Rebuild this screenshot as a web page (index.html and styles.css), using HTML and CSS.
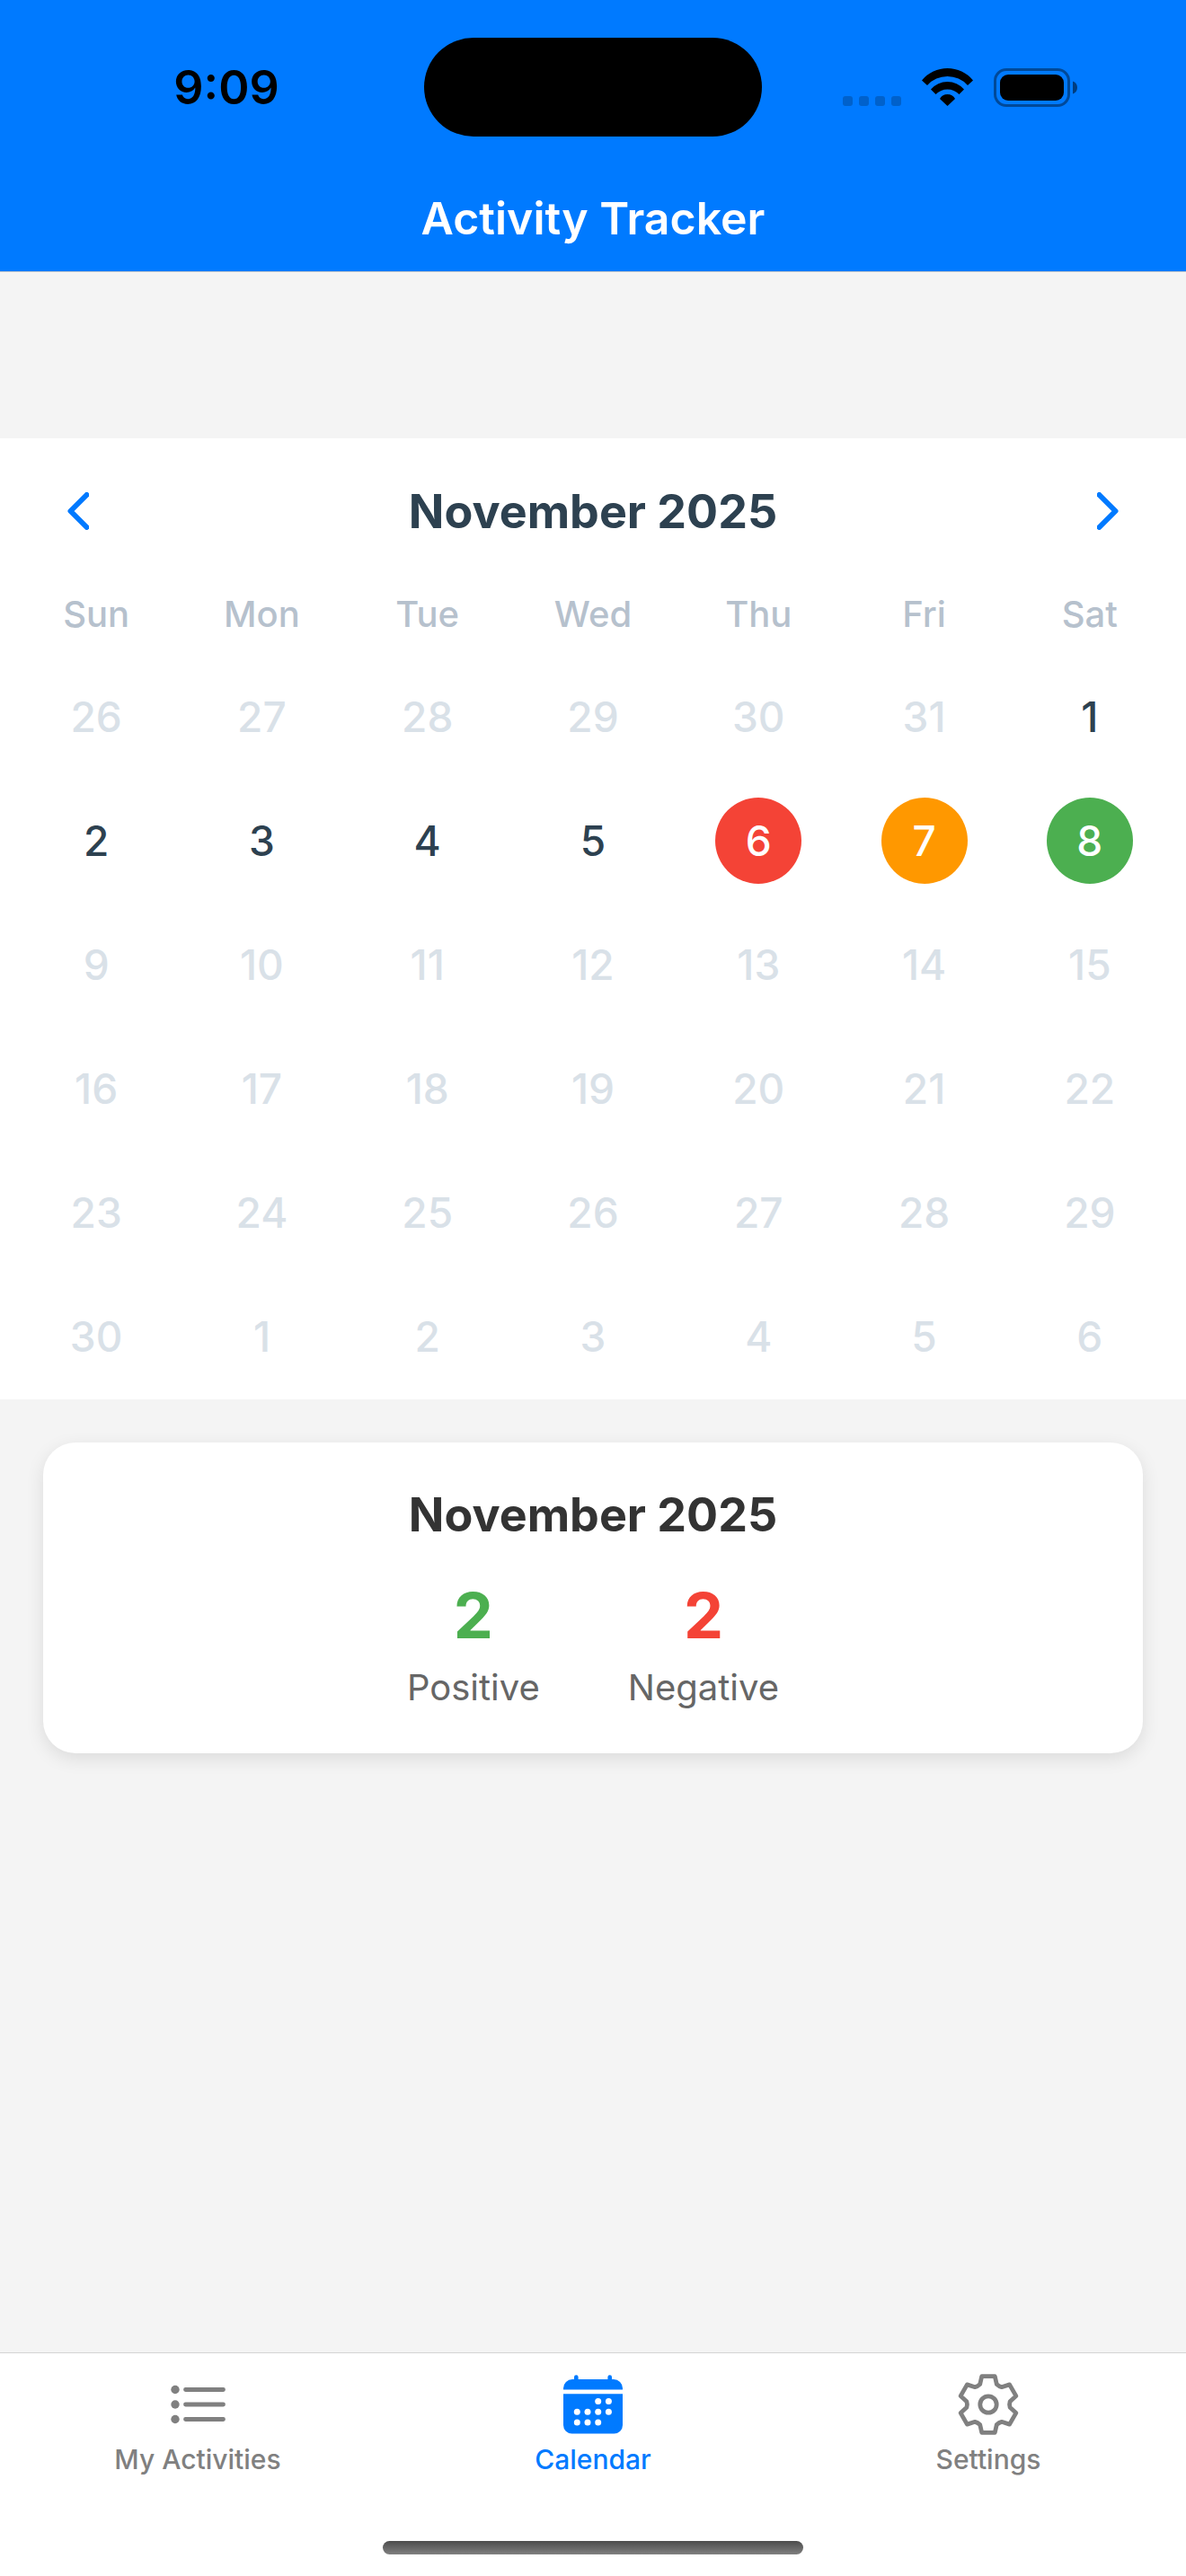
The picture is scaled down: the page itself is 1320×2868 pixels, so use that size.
FILE: index.html
```html
<!DOCTYPE html>
<html lang="en">
<head>
  <meta charset="UTF-8" />
  <meta name="viewport" content="width=device-width, initial-scale=1.0" />
  <title>Activity Tracker</title>
  <link rel="stylesheet" href="styles.css">
</head>
<body>

  <header class="header">
    <div class="status-bar">
      <span class="time">9:09</span>
      <span class="island"></span>
      <div class="status-icons">
        <svg class="signal" width="65" height="43" viewBox="0 0 65 43">
          <rect x="0" y="31" width="11" height="11" rx="3" />
          <rect x="18" y="31" width="11" height="11" rx="3" />
          <rect x="36" y="31" width="11" height="11" rx="3" />
          <rect x="54" y="31" width="11" height="11" rx="3" />
        </svg>
        <svg class="wifi" width="57" height="43" viewBox="0 0 57 43">
          <path d="M0 13.5A37 37 0 0 1 57 13.5L51 19A30.3 30.3 0 0 0 6 19Z" />
          <path d="M10 23.5A24.4 24.4 0 0 1 47 23.5L41.5 29A18 18 0 0 0 15.5 29Z" />
          <path d="M20 34A9.7 9.7 0 0 1 37 34L28.5 42Z" />
        </svg>
        <svg class="battery" width="93" height="43" viewBox="0 0 93 43">
          <rect x="1.5" y="1.5" width="82" height="40" rx="12.5" fill="none" stroke="#000" stroke-width="3" opacity="0.4" />
          <rect x="7" y="7" width="71" height="29" rx="9" />
          <path d="M88 14.5C91 15.5 93 18 93 21.5S91 27.5 88 28.5Z" opacity="0.5" />
        </svg>
      </div>
    </div>
    <h1 class="title">Activity Tracker</h1>
  </header>

  <main class="content">
    <section class="calendar">
      <div class="month-bar">
        <button class="arrow" type="button" aria-label="Previous month">
          <svg width="24" height="42" viewBox="0 0 24 42"><path d="M21.5 3L3.5 21L21.5 39" /></svg>
        </button>
        <h2 class="month">November 2025</h2>
        <button class="arrow" type="button" aria-label="Next month">
          <svg width="24" height="42" viewBox="0 0 24 42"><path d="M2.5 3L20.5 21L2.5 39" /></svg>
        </button>
      </div>

      <table class="days">
        <thead>
          <tr>
            <th>Sun</th><th>Mon</th><th>Tue</th><th>Wed</th><th>Thu</th><th>Fri</th><th>Sat</th>
          </tr>
        </thead>
        <tbody>
          <tr>
            <td><button class="day" disabled>26</button></td>
            <td><button class="day" disabled>27</button></td>
            <td><button class="day" disabled>28</button></td>
            <td><button class="day" disabled>29</button></td>
            <td><button class="day" disabled>30</button></td>
            <td><button class="day" disabled>31</button></td>
            <td><button class="day">1</button></td>
          </tr>
          <tr>
            <td><button class="day">2</button></td>
            <td><button class="day">3</button></td>
            <td><button class="day">4</button></td>
            <td><button class="day">5</button></td>
            <td><button class="day day-red">6</button></td>
            <td><button class="day day-orange">7</button></td>
            <td><button class="day day-green">8</button></td>
          </tr>
          <tr>
            <td><button class="day" disabled>9</button></td>
            <td><button class="day" disabled>10</button></td>
            <td><button class="day" disabled>11</button></td>
            <td><button class="day" disabled>12</button></td>
            <td><button class="day" disabled>13</button></td>
            <td><button class="day" disabled>14</button></td>
            <td><button class="day" disabled>15</button></td>
          </tr>
          <tr>
            <td><button class="day" disabled>16</button></td>
            <td><button class="day" disabled>17</button></td>
            <td><button class="day" disabled>18</button></td>
            <td><button class="day" disabled>19</button></td>
            <td><button class="day" disabled>20</button></td>
            <td><button class="day" disabled>21</button></td>
            <td><button class="day" disabled>22</button></td>
          </tr>
          <tr>
            <td><button class="day" disabled>23</button></td>
            <td><button class="day" disabled>24</button></td>
            <td><button class="day" disabled>25</button></td>
            <td><button class="day" disabled>26</button></td>
            <td><button class="day" disabled>27</button></td>
            <td><button class="day" disabled>28</button></td>
            <td><button class="day" disabled>29</button></td>
          </tr>
          <tr>
            <td><button class="day" disabled>30</button></td>
            <td><button class="day" disabled>1</button></td>
            <td><button class="day" disabled>2</button></td>
            <td><button class="day" disabled>3</button></td>
            <td><button class="day" disabled>4</button></td>
            <td><button class="day" disabled>5</button></td>
            <td><button class="day" disabled>6</button></td>
          </tr>
        </tbody>
      </table>
    </section>

    <!-- Monthly totals -->
    <section class="summary">
      <h2 class="summary-title">November 2025</h2>
      <div class="stats">
        <div class="stat">
          <span class="stat-value positive">2</span>
          <span class="stat-label">Positive</span>
        </div>
        <div class="stat">
          <span class="stat-value negative">2</span>
          <span class="stat-label">Negative</span>
        </div>
      </div>
    </section>
  </main>

  <nav class="tab-bar">
    <div class="tabs">
      <a class="tab" href="#activities">
        <svg width="70" height="70" viewBox="0 0 70 70">
          <g fill="currentColor">
            <circle cx="10" cy="18.5" r="4.7" />
            <circle cx="10" cy="35" r="4.7" />
            <circle cx="10" cy="51.5" r="4.7" />
          </g>
          <path d="M21.5 18.5H63.5M21.5 35H63.5M21.5 51.5H63.5" stroke="currentColor" stroke-width="4.8" stroke-linecap="round" />
        </svg>
        <span>My Activities</span>
      </a>
      <a class="tab active" href="#calendar">
        <svg width="70" height="70" viewBox="0 0 70 70">
          <g fill="currentColor">
            <path d="M14 7V4.500a2.300 2.300 0 0 1 4.600 0V7H51.400V4.500a2.300 2.300 0 0 1 4.600 0V7H58A10 10 0 0 1 68 17V18.500H2V17A10 10 0 0 1 12 7Z" />
            <path d="M2 23.300H68V58a9.500 9.500 0 0 1-9.500 9.500H11.500A9.500 9.500 0 0 1 2 58Z" />
          </g>
          <g fill="#fff">
            <circle cx="40.700" cy="31.500" r="3.500" />
            <circle cx="52.400" cy="31.500" r="3.500" />
            <circle cx="17.300" cy="43.200" r="3.500" />
            <circle cx="29" cy="43.200" r="3.500" />
            <circle cx="40.700" cy="43.200" r="3.500" />
            <circle cx="52.400" cy="43.200" r="3.500" />
            <circle cx="17.300" cy="55" r="3.500" />
            <circle cx="29" cy="55" r="3.500" />
            <circle cx="40.700" cy="55" r="3.500" />
          </g>
        </svg>
        <span>Calendar</span>
      </a>
      <a class="tab" href="#settings">
        <svg width="70" height="70" viewBox="-35 -35 70 70">
          <g fill="none" stroke="currentColor" stroke-width="4.800" stroke-linejoin="round">
            <path d="M-7.300 -31.300H7.300L9.300 -22.500Q12 -20 14.800 -19.300L23.600 -22.100L30.900 -9.400L24.100 -3.200Q23 0 24.100 3.200L30.900 9.400L23.600 22.100L14.800 19.300Q12 20 9.300 22.500L7.300 31.300H-7.300L-9.300 22.500Q-12 20 -14.800 19.300L-23.600 22.100L-30.900 9.400L-24.100 3.200Q-23 0 -24.100 -3.200L-30.900 -9.400L-23.600 -22.100L-14.800 -19.300Q-12 -20 -9.300 -22.500Z" />
            <circle r="9.200" />
          </g>
        </svg>
        <span>Settings</span>
      </a>
    </div>
    <div class="home-indicator"></div>
  </nav>

</body>
</html>
```
FILE: styles.css
```css
* {
  box-sizing: border-box;
}
body {
  margin: 0;
  min-height: 100vh;
  display: flex;
  flex-direction: column;
  font-family: Inter, "Liberation Sans", sans-serif;
  background: #f4f4f4;
  color: #333;
}
h1, h2 {
  margin: 0;
}
button {
  font-family: inherit;
  background: none;
  border: none;
  padding: 0;
  cursor: pointer;
}
svg {
  display: block;
}

/* Header */
.header {
  background: #007aff;
  padding-top: 42px;
  border-bottom: 1px solid #c4c7cb;
}
.status-bar {
  display: grid;
  grid-template-columns: 1fr 376px 1fr;
  align-items: center;
}
.time {
  padding-left: 32px;
  text-align: center;
  font-size: 52px;
  font-weight: 600;
  color: #000;
}
.island {
  height: 110px;
  border-radius: 55px;
  background: #000;
}
.status-icons {
  display: flex;
  justify-content: center;
  gap: 23px;
  padding-right: 32px;
}
.signal {
  opacity: 0.2;
}
.title {
  padding: 60px 0 28px;
  text-align: center;
  font-size: 50px;
  line-height: 62px;
  font-weight: 600;
  color: #fff;
}

/* Calendar */
.content {
  flex: 1;
  padding-top: 185px;
}
.calendar {
  background: #fff;
  padding: 0 15px 1px;
}
.month-bar {
  display: flex;
  justify-content: space-between;
  align-items: center;
  height: 162px;
  padding: 0 60px;
}
.month {
  font-size: 52px;
  font-weight: 700;
  color: #2d4150;
}
.arrow svg {
  fill: none;
  stroke: #007aff;
  stroke-width: 6;
  stroke-linecap: round;
  stroke-linejoin: round;
}
.days {
  width: 100%;
  table-layout: fixed;
  border-collapse: collapse;
}
.days th {
  height: 79px;
  padding: 0 0 12px;
  font-size: 40px;
  font-weight: 500;
  color: #b6c1cd;
}
.days td {
  height: 138px;
  padding: 0;
  text-align: center;
}
.day {
  width: 96px;
  height: 96px;
  border-radius: 50%;
  font-size: 46px;
  font-weight: 500;
  color: #2d4150;
}
.day:disabled {
  color: #d9e1e8;
  cursor: default;
}
.day-red {
  background: #f44336;
  color: #fff;
}
.day-orange {
  background: #ff9800;
  color: #fff;
}
.day-green {
  background: #4caf50;
  color: #fff;
}

/* Summary card */
.summary {
  margin: 48px;
  padding: 48px;
  background: #fff;
  border-radius: 36px;
  box-shadow: 0 6px 20px rgba(0,0,0,0.1);
  text-align: center;
}
.summary-title {
  font-size: 52px;
  line-height: 66px;
  font-weight: 700;
}
.stats {
  display: flex;
  justify-content: center;
  gap: 98px;
  margin-top: 36px;
}
.stat {
  display: flex;
  flex-direction: column;
}
.stat-value {
  font-size: 70px;
  line-height: 86px;
  font-weight: 700;
}
.stat-label {
  margin-top: 12px;
  font-size: 40px;
  line-height: 50px;
  color: #666;
}
.positive {
  color: #4caf50;
}
.negative {
  color: #f44336;
}

/* Tab bar */
.tab-bar {
  background: #fff;
  border-top: 1px solid #d4d4d4;
  padding-bottom: 24px;
}
.tabs {
  display: grid;
  grid-template-columns: repeat(3, 1fr);
  padding-top: 22px;
}
.tab {
  display: flex;
  flex-direction: column;
  align-items: center;
  gap: 7px;
  font-size: 30px;
  line-height: 38px;
  font-weight: 500;
  color: #808080;
  text-decoration: none;
}
.tab.active {
  color: #007aff;
}
.home-indicator {
  width: 468px;
  height: 15px;
  margin: 72px auto 0;
  border-radius: 8px;
  background: linear-gradient(#4c4c4c, #808080);
}
```
